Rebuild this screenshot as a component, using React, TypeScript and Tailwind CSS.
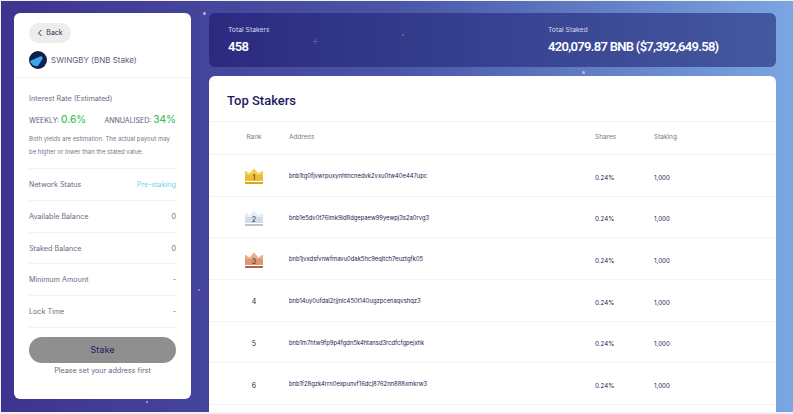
const stats = [
  { label: 'Total Stakers', value: '458', width: 'w-[320px]' },
  { label: 'Total Staked', value: '420,079.87 BNB ($7,392,649.58)', width: '' },
];

const infoRows = [
  { label: 'Network Status', value: 'Pre-staking', highlight: true },
  { label: 'Available Balance', value: '0' },
  { label: 'Staked Balance', value: '0' },
  { label: 'Minimum Amount', value: '-' },
  { label: 'Lock Time', value: '-' },
];

const stakers = [
  'bnb1tg0fjvwrpuxynhtncnedvk2vxu0tw40e447upc',
  'bnb1e5dv0t76lmk9ld8dgepaew99yewpj3s2a0rvg3',
  'bnb1jvxdsfvnwfmavu0dak5hc9eqltch7euztgfk05',
  'bnb14uy0ufdal2rjjnlc450t140ugzpcenaqvshqz3',
  'bnb1m7htw9fp9p4fgdn5k4htansd3rcdfcfgpejxhk',
  'bnb1f28gzk4rrn0expunvf16dcj8762nn888xmkrw3',
];

const crownColors: Record<number, { top: string; bottom: string; bar: string; text: string }> = {
  1: { top: '#f2cd50', bottom: '#eebd36', bar: '#d9a520', text: '#4f3803' },
  2: { top: '#e6ecf4', bottom: '#d3dce9', bar: '#b9c3d1', text: '#2d3a56' },
  3: { top: '#e9ae90', bottom: '#dd9775', bar: '#a9674a', text: '#4c2210' },
};

function Crown({ rank }: { rank: number }) {
  const c = crownColors[rank];
  return (
    <div className="relative -mt-[2px] h-[16px] w-[18px]">
      <svg width="18" height="16" viewBox="0 0 18 16">
        <path d="M0 2.5 L4.5 5.5 L9 0.5 L13.5 5.5 L18 2.5 V13 H0 Z" fill={c.top} />
        <rect x="0" y="7" width="18" height="6" fill={c.bottom} />
        <rect x="0" y="14" width="18" height="2" fill={c.bar} />
      </svg>
      <span className="absolute left-0 right-0 top-[5px] text-center text-[7px] leading-[9px]" style={{ color: c.text }}>
        {rank}
      </span>
    </div>
  );
}

function Sparkle({ className }: { className: string }) {
  return <div className={`absolute rounded-full ${className}`}></div>;
}

export default function App() {
  return (
    <div className="relative h-[414px] w-[793px] overflow-hidden bg-[#f1f1f3] font-['Inter',sans-serif]">
      <div className="mt-px ml-px h-[411px] flex gap-[18px] pl-[13px] pr-[17px] pt-[12px] bg-gradient-to-r from-[#3f3390] via-[#4a55a8] to-[#7ba6e2]">
        {/* left panel */}
        <aside className="h-[386px] w-[177px] shrink-0 rounded-md bg-white">
          <div className="h-[65px] border-b border-[#f3f3f5] px-[15px] pt-[10px]">
            <button className="flex h-[20px] w-[42px] items-center justify-center gap-[3px] rounded-full bg-[#ededed] text-[7px] text-[#2f2f4a]">
              <svg width="6" height="8" viewBox="0 0 6 8" fill="none" stroke="#333" strokeWidth="1">
                <path d="M4.5 1 L1.5 4 L4.5 7" />
              </svg>
              Back
            </button>
            <div className="mt-[8px] flex items-center gap-[4px]">
              <svg width="18" height="18" viewBox="0 0 18 18">
                <circle cx="9" cy="9" r="9" fill="#10204a" />
                <path d="M1 10 L12 5 L14 7 L9 15 Q3 16 1 10 Z" fill="#3ba6ee" />
              </svg>
              <span className="text-[8px] text-[#5c5c74]">SWINGBY (BNB Stake)</span>
            </div>
          </div>
          <div className="mx-[15px]">
            <div className="h-[91px] border-b border-[#f1f1f3] pt-[15px]">
              <p className="text-[7.2px] leading-[11px] text-[#6a6a80]">Interest Rate (Estimated)</p>
              <div className="mt-[8px] flex items-baseline justify-between whitespace-nowrap">
                <p className="text-[7px] text-[#5c5c74]">
                  WEEKLY: <span className="text-[10px] font-medium text-[#3fc35a]">0.6%</span>
                </p>
                <p className="text-[7px] text-[#5c5c74]">
                  ANNUALISED: <span className="text-[10px] font-medium text-[#3fc35a]">34%</span>
                </p>
              </div>
              <p className="mt-[6px] text-[6px] leading-[12.5px] text-[#77778c]">
                Both yields are estimation. The actual payout may be higher or lower than the stated value.
              </p>
            </div>
            {infoRows.map((row) => (
              <div key={row.label} className="flex h-[31.8px] items-center justify-between border-b border-[#f1f1f3] pt-[2px] text-[7.2px]">
                <span className="text-[#6a6a80]">{row.label}</span>
                <span className={row.highlight ? 'text-[#6fd3ea]' : 'text-[#6a6a80]'}>{row.value}</span>
              </div>
            ))}
            <button className="mt-[9px] h-[26px] w-full rounded-full bg-[#8f8f8f] text-[9px] text-[#1d1b5e]">Stake</button>
            <p className="mt-[2px] text-center text-[7.2px] leading-[11px] text-[#6a6a80]">Please set your address first</p>
          </div>
        </aside>

        {/* right column */}
        <main className="flex min-w-0 flex-1 flex-col gap-[9px]">
          <section className="flex h-[54px] shrink-0 rounded-md bg-gradient-to-r from-[#2b2a80] to-[#44589f] pl-[19px] pt-[12px]">
            {stats.map((stat) => (
              <div key={stat.label} className={stat.width}>
                <p className="text-[6.8px] leading-[9px] text-[#d5d7ee]">{stat.label}</p>
                <p className="mt-[4px] text-[13px] leading-[18px] font-semibold tracking-[-0.7px] text-white font-['Roboto',sans-serif]">{stat.value}</p>
              </div>
            ))}
          </section>
          <section className="flex-1 overflow-hidden rounded-t-md bg-white">
            <h1 className="h-[46px] border-b border-[#f3f3f5] pl-[18px] pt-[15px] text-[13px] leading-[20px] font-medium text-[#1d1b5e] font-['Roboto',sans-serif]">
              Top Stakers
            </h1>
            <div className="flex h-[33px] items-center border-b border-[#f3f3f5] pb-px text-[6.5px] text-[#77778c]">
              <span className="w-[80px] pl-[10px] text-center">Rank</span>
              <span className="w-[306px]">Address</span>
              <span className="w-[59px]">Shares</span>
              <span>Staking</span>
            </div>
            {stakers.map((address, i) => (
              <div key={address} className="flex h-[41.7px] items-center border-b border-[#f5f5f7] pt-[4px] text-[6.2px] text-[#1d1b4f]">
                <div className="flex w-[80px] justify-center pl-[10px] text-[7px]">
                  {i < 3 ? <Crown rank={i + 1} /> : i + 1}
                </div>
                <span className="-mt-[2px] w-[306px] text-[5.85px]">{address}</span>
                <span className="w-[59px]">0.24%</span>
                <span>1,000</span>
              </div>
            ))}
          </section>
        </main>
      </div>

      <Sparkle className="left-[203px] top-[12px] h-[3px] w-[3px] bg-white/60" />
      <Sparkle className="left-[198px] top-[289px] h-[2px] w-[2px] bg-white/40" />
      <Sparkle className="left-[146px] top-[401px] h-[2px] w-[2px] bg-white/60" />
      <span className="absolute left-[312px] top-[34px] text-[10px] leading-[12px] text-white/25">+</span>
      <Sparkle className="left-[402px] top-[34px] h-[2px] w-[2px] bg-white/25" />
      <Sparkle className="left-[582px] top-[71px] h-[3px] w-[3px] bg-white/50" />
    </div>
  );
}
